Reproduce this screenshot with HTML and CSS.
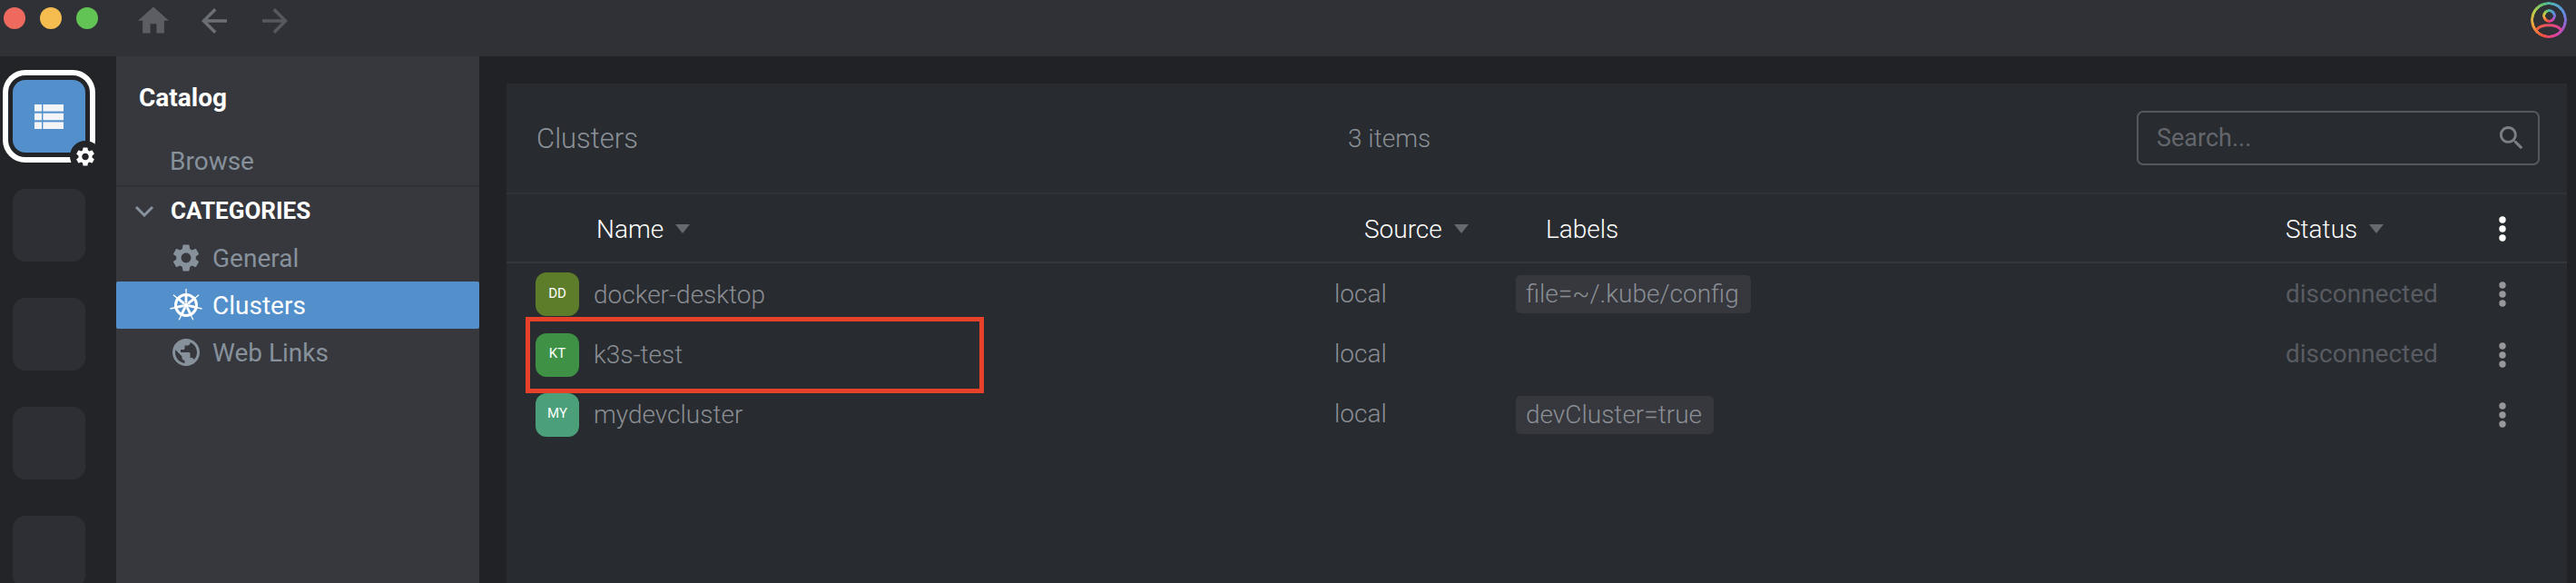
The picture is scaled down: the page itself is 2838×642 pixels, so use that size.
FILE: index.html

```html
<!DOCTYPE html>
<html lang="en">
<head>
  <meta charset="UTF-8" />
  <title>Catalog - Clusters</title>
  <link rel="stylesheet" href="styles.css">
</head>
<body>
<svg class="defs" width="0" height="0">
  <symbol id="i-gear" viewBox="2.5 2 19 20"><path d="M19.14 12.94c.04-.3.06-.61.06-.94 0-.32-.02-.64-.07-.94l2.03-1.58a.49.49 0 0 0 .12-.61l-1.92-3.32a.488.488 0 0 0-.59-.22l-2.39.96c-.5-.38-1.03-.7-1.62-.94l-.36-2.54a.484.484 0 0 0-.48-.41h-3.84c-.24 0-.43.17-.47.41l-.36 2.54c-.59.24-1.13.57-1.62.94l-2.39-.96c-.22-.08-.47 0-.59.22L2.74 8.87c-.12.21-.08.47.12.61l2.03 1.58c-.05.3-.09.63-.09.94s.02.64.07.94l-2.03 1.58a.49.49 0 0 0-.12.61l1.92 3.32c.12.22.37.29.59.22l2.39-.96c.5.38 1.03.7 1.62.94l.36 2.54c.05.24.24.41.48.41h3.84c.24 0 .44-.17.47-.41l.36-2.54c.59-.24 1.13-.56 1.62-.94l2.39.96c.22.08.47 0 .59-.22l1.92-3.32c.12-.22.07-.47-.12-.61l-2.01-1.58zM12 15.6c-1.98 0-3.6-1.62-3.6-3.6s1.62-3.6 3.6-3.6 3.6 1.62 3.6 3.6-1.62 3.6-3.6 3.6z"/></symbol>
  <symbol id="i-arrow" viewBox="4 4 16 16"><path d="M20 11H7.83l5.59-5.59L12 4l-8 8 8 8 1.41-1.41L7.83 13H20v-2z"/></symbol>
  <symbol id="i-kebab" viewBox="0 0 8 28"><circle cx="4" cy="4" r="3.7"/><circle cx="4" cy="14" r="3.7"/><circle cx="4" cy="24" r="3.7"/></symbol>
</svg>

<div class="topbar">
  <div class="traffic">
    <span class="light red"></span>
    <span class="light yellow"></span>
    <span class="light green"></span>
  </div>
  <svg class="nav-home" viewBox="2 3 20 17"><path d="M10 20v-6h4v6h5v-8h3L12 3 2 12h3v8z"/></svg>
  <svg class="nav-arrow back"><use href="#i-arrow"/></svg>
  <svg class="nav-arrow forward"><use href="#i-arrow"/></svg>
  <div class="user-icon">
    <div class="user-ring"></div>
    <div class="user-head"></div>
    <svg class="user-shoulders" viewBox="0 0 40 40">
      <defs>
        <linearGradient id="shoulders" x1="0" x2="1" y1="0" y2="0">
          <stop offset="0" stop-color="#f0603c"/>
          <stop offset="1" stop-color="#e0409a"/>
        </linearGradient>
      </defs>
      <path d="M6.5 31 C11 24 29 24 33.5 31" fill="none" stroke="url(#shoulders)" stroke-width="3"/>
    </svg>
  </div>
</div>

<div class="app">
  <div class="rail">
    <div class="hotbar-item active">
      <svg class="table-icon" viewBox="0 0 32 27">
        <rect x="0" y="0" width="8" height="7.6"/><rect x="9.4" y="0" width="22.6" height="7.6"/>
        <rect x="0" y="9.7" width="8" height="7.6"/><rect x="9.4" y="9.7" width="22.6" height="7.6"/>
        <rect x="0" y="19.4" width="8" height="7.6"/><rect x="9.4" y="19.4" width="22.6" height="7.6"/>
      </svg>
      <span class="gear-badge"><svg><use href="#i-gear"/></svg></span>
    </div>
    <div class="hotbar-item"></div>
    <div class="hotbar-item"></div>
    <div class="hotbar-item"></div>
    <div class="hotbar-item"></div>
  </div>

  <div class="sidebar">
    <div class="sidebar-title">Catalog</div>
    <div class="browse">Browse</div>
    <div class="categories">
      <svg class="chevron" viewBox="0 0 22 13"><path d="M2 2l9 9 9-9" fill="none" stroke-width="3"/></svg>
      <span>CATEGORIES</span>
    </div>
    <div class="cat-item"><svg class="cat-icon"><use href="#i-gear"/></svg>General</div>
    <div class="cat-item selected">
      <svg class="cat-icon wheel" viewBox="0 0 36 36">
        <circle cx="18" cy="18" r="11.5" class="rim"/>
        <circle cx="18" cy="18" r="2.6" class="hub"/>
        <g id="spoke"><path d="M18 0v18" class="spoke-thin"/><path d="M18 7v8" class="spoke-thick"/></g>
        <use href="#spoke" transform="rotate(51.43 18 18)"/>
        <use href="#spoke" transform="rotate(102.86 18 18)"/>
        <use href="#spoke" transform="rotate(154.29 18 18)"/>
        <use href="#spoke" transform="rotate(205.71 18 18)"/>
        <use href="#spoke" transform="rotate(257.14 18 18)"/>
        <use href="#spoke" transform="rotate(308.57 18 18)"/>
      </svg>
      Clusters
    </div>
    <div class="cat-item"><svg class="cat-icon" viewBox="2 2 20 20"><path d="M12 2C6.48 2 2 6.48 2 12s4.48 10 10 10 10-4.48 10-10S17.52 2 12 2zm-1 17.93c-3.95-.49-7-3.85-7-7.93 0-.62.08-1.21.21-1.79L9 15v1c0 1.1.9 2 2 2v1.93zm6.9-2.54c-.26-.81-1-1.39-1.9-1.39h-1v-3c0-.55-.45-1-1-1H8v-2h2c.55 0 1-.45 1-1V7h2c1.1 0 2-.9 2-2v-.41c2.93 1.19 5 4.06 5 7.41 0 2.08-.8 3.97-2.1 5.39z"/></svg>Web Links</div>
  </div>

  <div class="content">
    <div class="panel">
      <div class="panel-header">
        <div class="panel-title">Clusters</div>
        <div class="item-count">3 items</div>
        <div class="search">
          <span>Search...</span>
          <svg viewBox="3 3 18 18"><path d="M15.5 14h-.79l-.28-.27C15.41 12.59 16 11.11 16 9.5 16 5.91 13.09 3 9.5 3S3 5.91 3 9.5 5.91 16 9.5 16c1.61 0 3.09-.59 4.23-1.57l.27.28v.79l5 4.99L20.49 19l-4.99-5zm-6 0C7.01 14 5 11.99 5 9.5S7.01 5 9.5 5 14 7.01 14 9.5 11.99 14 9.5 14z"/></svg>
        </div>
      </div>

      <div class="table-head">
        <div class="th">Name<i class="sort"></i></div>
        <div class="th">Source<i class="sort"></i></div>
        <div class="th">Labels</div>
        <div class="th">Status<i class="sort"></i></div>
        <svg class="kebab head"><use href="#i-kebab"/></svg>
      </div>

      <div class="rows">
        <div class="row">
          <div class="name-cell"><span class="avatar dd">DD</span>docker-desktop</div>
          <div class="source">local</div>
          <div><span class="label">file=~/.kube/config</span></div>
          <div class="status">disconnected</div>
          <svg class="kebab"><use href="#i-kebab"/></svg>
        </div>
        <div class="row">
          <div class="name-cell"><span class="avatar kt">KT</span>k3s-test</div>
          <div class="source">local</div>
          <div></div>
          <div class="status">disconnected</div>
          <svg class="kebab"><use href="#i-kebab"/></svg>
        </div>
        <div class="row">
          <div class="name-cell"><span class="avatar my">MY</span>mydevcluster</div>
          <div class="source">local</div>
          <div><span class="label">devCluster=true</span></div>
          <div class="status"></div>
          <svg class="kebab"><use href="#i-kebab"/></svg>
        </div>
      </div>
    </div>
  </div>
</div>

<!-- annotation drawn over the screenshot -->
<div class="highlight"></div>
</body>
</html>
```

FILE: styles.css

```css
html, body {
  margin: 0;
  height: 100%;
  overflow: hidden;
}
body {
  font-family: Roboto, "Liberation Sans", sans-serif;
  background-color: #212225;
  position: relative;
}
.defs {
  position: absolute;
}

/* top bar */
.topbar {
  height: 62px;
  background-color: #303137;
  display: flex;
  align-items: flex-start;
}
.traffic {
  display: flex;
  gap: 16px;
  padding: 8px 0 0 4px;
}
.light {
  width: 24px;
  height: 24px;
  border-radius: 50%;
}
.light.red { background-color: #ee6a5f; }
.light.yellow { background-color: #f5bd4f; }
.light.green { background-color: #61c454; }
.nav-home {
  width: 34px;
  height: 30px;
  fill: #5c5e64;
  margin: 7px 0 0 44px;
}
.nav-arrow {
  width: 28px;
  height: 28px;
  margin-top: 9px;
}
.nav-arrow.back {
  fill: #6b6e74;
  margin-left: 36px;
}
.nav-arrow.forward {
  fill: #56585e;
  margin-left: 39px;
  transform: scaleX(-1);
}
.user-icon {
  position: relative;
  width: 40px;
  height: 40px;
  margin: 2px 10px 0 auto;
}
.user-ring,
.user-head {
  position: absolute;
  border-radius: 50%;
  background: conic-gradient(#4fb7a8, #5a8fe0 60deg, #9a5fd0 110deg, #e0409a 160deg, #f0503c 200deg, #f5a03c 250deg, #b5cc4a 300deg, #5cc070 340deg, #4fb7a8);
}
.user-ring {
  inset: 0;
  -webkit-mask: radial-gradient(circle, transparent 16.5px, #000 17px);
  mask: radial-gradient(circle, transparent 16.5px, #000 17px);
}
.user-head {
  left: 12.5px;
  top: 7.5px;
  width: 15px;
  height: 15px;
  -webkit-mask: radial-gradient(circle, transparent 4px, #000 4.5px);
  mask: radial-gradient(circle, transparent 4px, #000 4.5px);
}
.user-shoulders {
  position: absolute;
  inset: 0;
}

.app {
  display: flex;
  height: 580px;
}

/* left rail */
.rail {
  width: 128px;
  flex-shrink: 0;
  background-color: #232427;
  box-sizing: border-box;
  padding: 26px 0 0 14px;
  display: flex;
  flex-direction: column;
  gap: 40px;
  overflow: hidden;
}
.hotbar-item {
  width: 80px;
  height: 80px;
  flex-shrink: 0;
  border-radius: 14px;
  background-color: #2e2f34;
  display: flex;
  align-items: center;
  justify-content: center;
  position: relative;
}
.hotbar-item.active {
  background-color: #5390cb;
  outline: 6px solid #fff;
  outline-offset: 5.5px;
}
.table-icon {
  width: 32px;
  height: 27px;
  fill: #f2f4f8;
}
.gear-badge {
  position: absolute;
  right: -17px;
  bottom: -21px;
  width: 34px;
  height: 34px;
  border-radius: 50%;
  background-color: #232427;
  display: flex;
  align-items: center;
  justify-content: center;
}
.gear-badge svg {
  width: 20px;
  height: 21px;
  fill: #fff;
}

/* catalog sidebar */
.sidebar {
  width: 400px;
  flex-shrink: 0;
  background-color: #37383d;
}
.sidebar-title {
  color: #fff;
  font-weight: 700;
  font-size: 28px;
  line-height: 30px;
  padding: 31px 0 0 25px;
}
.browse {
  color: #86919c;
  font-size: 28px;
  line-height: 30px;
  padding: 40px 0 0 59px;
  height: 41px;
  border-bottom: 2px solid #2f3035;
}
.categories {
  display: flex;
  align-items: center;
  height: 52px;
  color: #fff;
  font-weight: 700;
  font-size: 26px;
}
.chevron {
  width: 22px;
  height: 13px;
  stroke: #86919c;
  margin: 0 18px 0 20px;
}
.cat-item {
  display: flex;
  align-items: center;
  height: 52px;
  color: #86919c;
  font-size: 28px;
  padding-left: 62px;
}
.cat-item.selected {
  background-color: #5390cb;
  color: #fff;
  border-radius: 2px;
}
.cat-icon {
  width: 30px;
  height: 30px;
  fill: #86919c;
  margin-right: 14px;
}
.cat-icon.wheel {
  width: 36px;
  height: 36px;
  margin: 0 11px 0 -3px;
  fill: none;
  stroke: #fff;
}
.rim {
  stroke-width: 3;
}
.cat-icon.wheel .hub {
  fill: #fff;
  stroke: none;
}
.spoke-thin {
  stroke-width: 1.3;
}
.spoke-thick {
  stroke-width: 2.8;
}

/* main panel */
.content {
  flex: 1;
  padding: 30px 10px 0 30px;
  background-color: #212225;
}
.panel {
  height: 100%;
  background-color: #282b2f;
}
.panel-header {
  height: 120px;
  border-bottom: 2px solid #2f3237;
  display: flex;
  align-items: center;
  padding: 0 30px 0 33px;
}
.panel-title {
  color: #8a9097;
  font-size: 31px;
  font-weight: 300;
  width: 894px;
}
.item-count {
  color: #8a9097;
  font-size: 28px;
  font-weight: 300;
}
.search {
  margin-left: auto;
  width: 444px;
  height: 60px;
  box-sizing: border-box;
  border: 2px solid #55585e;
  border-radius: 7px;
  display: flex;
  align-items: center;
  justify-content: space-between;
  padding: 0 16px 0 20px;
  color: #63666c;
  font-size: 27px;
}
.search svg {
  width: 26px;
  height: 26px;
  fill: #7c7f85;
}

.table-head,
.row {
  display: grid;
  align-items: center;
}
.table-head {
  grid-template-columns: 846px 200px 815px 228px 22px;
  height: 72px;
  padding: 2px 0 0 99px;
  border-bottom: 2px solid #34373c;
}
.th {
  color: #fff;
  font-size: 28px;
  font-weight: 300;
  display: flex;
  align-items: center;
}
.sort {
  width: 0;
  height: 0;
  margin-left: 13px;
  border-left: 8.5px solid transparent;
  border-right: 8.5px solid transparent;
  border-top: 10px solid #66696d;
}
.rows {
  padding-top: 1px;
}
.row {
  grid-template-columns: 880px 200px 848px 228px 22px;
  height: 66.4px;
  padding-left: 32px;
  color: #8a8e94;
  font-size: 28px;
  font-weight: 300;
}
.name-cell {
  display: flex;
  align-items: center;
  gap: 16px;
}
.avatar {
  width: 48px;
  height: 48px;
  border-radius: 12px;
  display: flex;
  align-items: center;
  justify-content: center;
  color: #fff;
  font-size: 15px;
  font-weight: 400;
  padding-bottom: 3px;
  box-sizing: border-box;
}
.avatar.dd { background-color: #5e7d2b; }
.avatar.kt { background-color: #3e9145; }
.avatar.my { background-color: #4ba079; }
.source {
  padding-bottom: 2px;
}
.label {
  display: inline-block;
  background-color: #36383d;
  border-radius: 5px;
  padding: 0 13px 0 11px;
  height: 42px;
  line-height: 42px;
}
.status {
  color: #585b61;
  font-weight: 400;
  padding-bottom: 2px;
}
.kebab {
  width: 8px;
  height: 28px;
  justify-self: center;
  fill: #96989c;
}
.kebab.head {
  fill: #fff;
}

/* red annotation box */
.highlight {
  position: absolute;
  left: 579px;
  top: 349px;
  width: 495px;
  height: 74px;
  border: 5px solid #e8412a;
}
```
